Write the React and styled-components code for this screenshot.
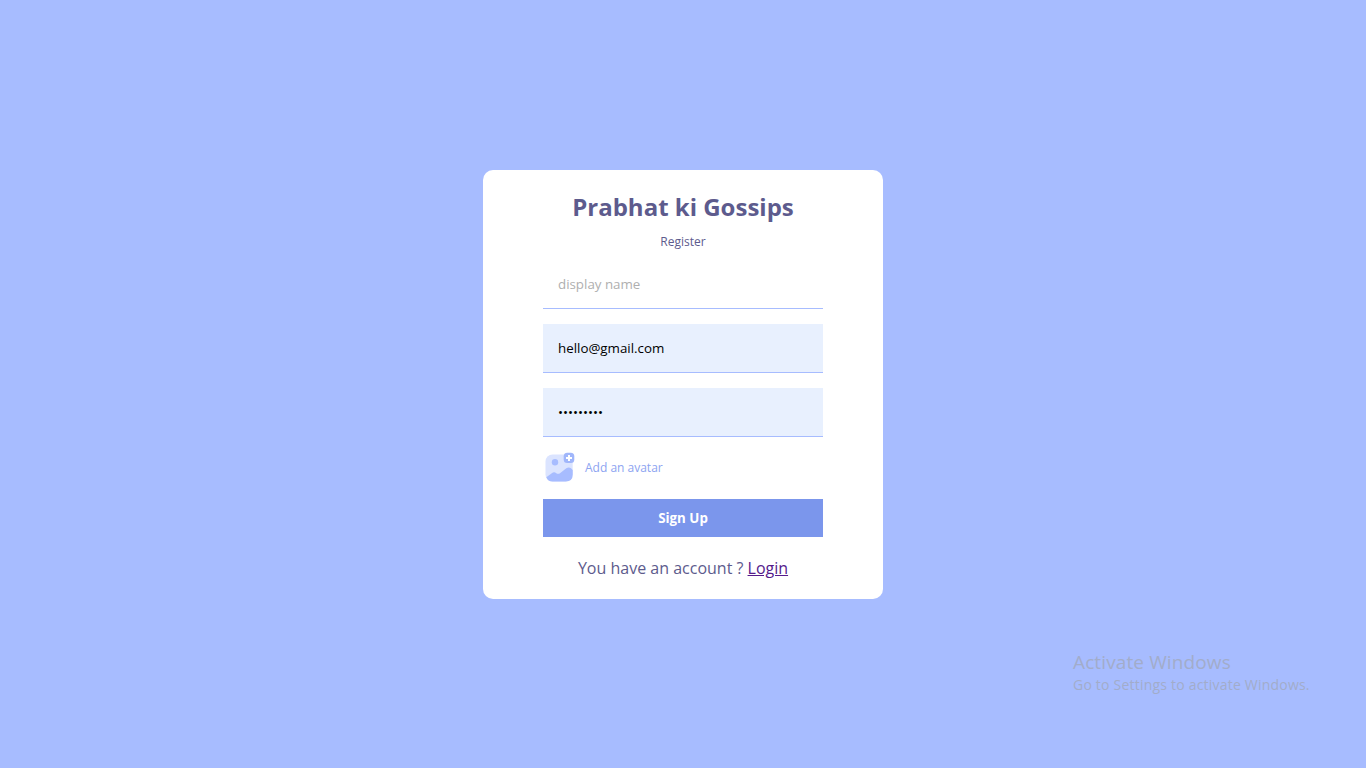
import React from "react";
import styled, { createGlobalStyle } from "styled-components";

const GlobalStyle = createGlobalStyle`
  body { margin: 0; }
  input, button { font-family: "Open Sans", sans-serif; }
`;

const Page = styled.div`
  position: relative;
  height: 100vh;
  background: #a7bcff;
  display: flex;
  align-items: center;
  justify-content: center;
  font-family: "Open Sans", sans-serif;
  overflow: hidden;
`;

const Card = styled.div`
  background: #fff;
  padding: 20px 60px;
  border-radius: 10px;
  display: flex;
  flex-direction: column;
  align-items: center;
  gap: 10px;
`;

const Logo = styled.span`
  color: #5d5b8d;
  font-weight: bold;
  font-size: 24px;
  line-height: 33px;
`;

const Title = styled.span`
  color: #5d5b8d;
  font-size: 12px;
  line-height: 17px;
`;

const Form = styled.form`
  display: flex;
  flex-direction: column;
  gap: 15px;
`;

const Field = styled.input`
  box-sizing: border-box;
  width: 280px;
  height: 49px;
  padding: 15px;
  border: none;
  border-bottom: 1px solid #a7bcff;
  border-radius: 0;
  outline: none;
  font-size: 13.333px;
  color: #000;
  background: ${(p) => (p.$filled ? "#e8f0fe" : "#fff")};
  &::placeholder { color: #afafaf; }
`;

const AvatarLabel = styled.label`
  display: flex;
  align-items: center;
  gap: 10px;
  height: 32px;
  color: #8da4f1;
  font-size: 12px;
`;

const SignUp = styled.button`
  background: #7b96ec;
  color: #fff;
  padding: 10px;
  height: 38px;
  font-weight: bold;
  font-size: 13.333px;
  border: none;
`;

const Account = styled.p`
  margin: 10px 0 0;
  color: #5d5b8d;
  font-size: 16px;
  line-height: 22px;
`;

const LoginLink = styled.a`
  color: #551a8b;
  text-decoration: underline;
`;

const Watermark = styled.div`
  position: absolute;
  left: 1073px;
  top: 650px;
  color: #a2acca;
  white-space: nowrap;
`;

const WatermarkTitle = styled.div`
  font-size: 19px;
  line-height: 24px;
  letter-spacing: 0.12px;
`;

const WatermarkText = styled.div`
  font-size: 14px;
  line-height: 21px;
  letter-spacing: 0.21px;
`;

const AvatarIcon = () => (
  <svg width="32" height="32" viewBox="0 0 32 32">
    <rect x="2.500" y="2.500" width="27.200" height="27" rx="7" fill="#dbe4ff" />
    <path d="M3.300 25.300L8.800 21.200Q11.200 19.500 13.300 21.200Q15.200 22.600 17.300 21L23.300 16.300Q25.800 14.500 28 16.300L29.700 18V22.500Q29.700 29.500 22.700 29.500H9.500Q4.700 29.500 3.300 25.300Z" fill="#a7bcff" />
    <circle cx="12" cy="10.300" r="3.200" fill="#a7bcff" />
    <rect x="20.700" y="0.700" width="10.600" height="10.400" rx="3.500" fill="#a0b6fb" />
    <path d="M26 2.900V8.900M23 5.900H29" stroke="#fff" strokeWidth="2" />
  </svg>
);

export default function App() {
  return (
    <>
      <GlobalStyle />
      <Page>
        <Card>
          <Logo>Prabhat ki Gossips</Logo>
          <Title>Register</Title>
          <Form>
            <Field type="text" placeholder="display name" />
            <Field $filled type="text" defaultValue="hello@gmail.com" />
            <Field $filled type="password" defaultValue="123456789" />
            <AvatarLabel>
              <AvatarIcon />
              <span>Add an avatar</span>
            </AvatarLabel>
            <SignUp type="button">Sign Up</SignUp>
          </Form>
          <Account>
            You have an account ? <LoginLink href="#">Login</LoginLink>
          </Account>
        </Card>
        <Watermark>
          <WatermarkTitle>Activate Windows</WatermarkTitle>
          <WatermarkText>Go to Settings to activate Windows.</WatermarkText>
        </Watermark>
      </Page>
    </>
  );
}
